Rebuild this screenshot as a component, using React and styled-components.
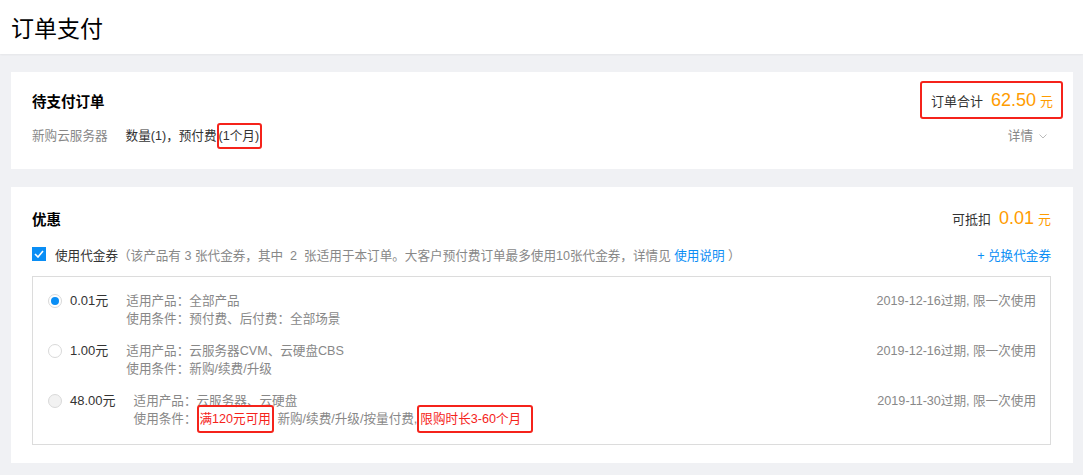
import React from "react";
import styled, { createGlobalStyle } from "styled-components";

const GlobalStyle = createGlobalStyle`
  html, body {
    margin: 0;
    padding: 0;
    background: #f0f1f4;
    font-family: "Liberation Sans", "Noto Sans CJK SC", sans-serif;
    font-size: 12.6px;
    color: #333;
  }
`;

const Header = styled.div`
  height: 54px;
  background: #fff;
  display: flex;
  align-items: center;
  padding-left: 11px;
  box-shadow: 0 1px 2px rgba(0, 0, 0, 0.05);
`;

const PageTitle = styled.h1`
  margin: 0;
  font-size: 23px;
  font-weight: normal;
  color: #000;
`;

const Main = styled.div`
  padding: 18px 10px 12px 11px;
  display: flex;
  flex-direction: column;
  gap: 18px;
`;

const Card = styled.div`
  background: #fff;
  padding: ${props => props.padding};
`;

const HeadRow = styled.div`
  display: flex;
  align-items: center;
  justify-content: space-between;
  height: ${props => props.height || 22}px;
`;

const CardTitle = styled.div`
  font-size: 14.5px;
  font-weight: bold;
  color: #000;
`;

const Mark = styled.span`
  border: 2px solid #f5231b;
  border-radius: 3px;
  color: ${props => (props.red ? "#f5231b" : "inherit")};
  padding: ${props => props.pad || "5px 1px"};
`;

const TotalBox = styled.div`
  height: 38px;
  box-sizing: border-box;
  border: 2px solid #f5231b;
  border-radius: 3px;
  display: flex;
  align-items: baseline;
  padding: 0 8px 0 9px;
  line-height: 34px;
`;

const Amount = styled.div`
  display: flex;
  align-items: baseline;
`;

const Label = styled.span`
  color: #333;
  font-size: 13px;
`;

const Price = styled.span`
  color: #ff9c00;
  font-size: 18px;
  margin: 0 4px 0 8px;
`;

const Unit = styled.span`
  color: #ff9c00;
  font-size: 13px;
`;

const DetailRow = styled.div`
  display: flex;
  align-items: center;
  justify-content: space-between;
  margin-top: 8px;
  line-height: 18px;
`;

const Grey = styled.span`
  color: #888;
  margin-right: ${props => props.gap || 0}px;
`;

const Toggle = styled.span`
  color: #888;
  display: flex;
  align-items: center;
  gap: 6px;
  margin-right: 16px;
`;

const CheckRow = styled.div`
  display: flex;
  align-items: center;
  justify-content: space-between;
  margin-top: 15px;
  height: 20px;
`;

const CheckLabel = styled.label`
  display: flex;
  align-items: center;
  color: #333;
`;

const CheckBox = styled.span`
  width: 14px;
  height: 14px;
  background: #0a8ef5;
  display: inline-flex;
  align-items: center;
  justify-content: center;
  margin-right: 9px;
`;

const Link = styled.a`
  color: #0a8ef5;
  text-decoration: none;
  cursor: pointer;
`;

const VoucherList = styled.div`
  margin-top: 12px;
  border: 1px solid #dcdcdc;
  padding: 15px 14px 16px 15px;
  display: flex;
  flex-direction: column;
  gap: 14px;
`;

const VoucherRow = styled.div`
  display: flex;
  align-items: flex-start;
  line-height: 18px;
`;

const Radio = styled.span`
  width: 14px;
  height: 14px;
  box-sizing: border-box;
  border-radius: 50%;
  border: 1px solid #d9d9d9;
  background: ${props => (props.disabled ? "#f2f2f2" : "#fff")};
  display: inline-flex;
  align-items: center;
  justify-content: center;
  margin: 2px 8px 0 0;
  flex-shrink: 0;
  &::after {
    content: "";
    width: 8px;
    height: 8px;
    border-radius: 50%;
    background: ${props => (props.checked ? "#0a8ef5" : "transparent")};
  }
`;

const Value = styled.span`
  color: #333;
  font-size: 13px;
  margin-right: 18px;
  white-space: nowrap;
`;

const Desc = styled.div`
  flex: 1;
  color: #888;
`;

const Expire = styled.div`
  color: #888;
  white-space: nowrap;
`;

const Chevron = () => (
  <svg width="8" height="5" viewBox="0 0 8 5">
    <polyline points="0.5,0.5 4,4 7.5,0.5" fill="none" stroke="#bbb" strokeWidth="1" />
  </svg>
);

const Check = () => (
  <svg width="10" height="8" viewBox="0 0 10 8">
    <polyline points="1,4 4,7 9,1" fill="none" stroke="#fff" strokeWidth="1.6" />
  </svg>
);

const vouchers = [
  {
    value: "0.01元",
    checked: true,
    product: "全部产品",
    cond: "预付费、后付费：全部场景",
    expire: "2019-12-16过期, 限一次使用"
  },
  {
    value: "1.00元",
    product: "云服务器CVM、云硬盘CBS",
    cond: "新购/续费/升级",
    expire: "2019-12-16过期, 限一次使用"
  },
  {
    value: "48.00元",
    disabled: true,
    product: "云服务器、云硬盘",
    cond: (
      <>
        <Mark red pad="5px 1px">满120元可用</Mark> 新购/续费/升级/按量付费,
        <Mark red pad="5px 10px 5px 1px">限购时长3-60个月</Mark>
      </>
    ),
    expire: "2019-11-30过期, 限一次使用"
  }
];

export default function App() {
  return (
    <>
      <GlobalStyle />
      <Header>
        <PageTitle>订单支付</PageTitle>
      </Header>
      <Main>
        <Card padding="9px 10px 24px 21px">
          <HeadRow height={38}>
            <CardTitle>待支付订单</CardTitle>
            <TotalBox>
              <Label>订单合计</Label>
              <Price>62.50</Price>
              <Unit>元</Unit>
            </TotalBox>
          </HeadRow>
          <DetailRow>
            <span>
              <Grey gap={18}>新购云服务器</Grey>
              数量(1)，预付费<Mark pad="4px 1px 4px 0">(1个月)</Mark>
            </span>
            <Toggle>
              详情 <Chevron />
            </Toggle>
          </DetailRow>
        </Card>
        <Card padding="20px 22px 18px 21px">
          <HeadRow>
            <CardTitle>优惠</CardTitle>
            <Amount>
              <Label>可抵扣</Label>
              <Price>0.01</Price>
              <Unit>元</Unit>
            </Amount>
          </HeadRow>
          <CheckRow>
            <CheckLabel>
              <CheckBox>
                <Check />
              </CheckBox>
              使用代金券
              <Grey>
                （该产品有 3 张代金券，其中 &nbsp;2&nbsp; 张适用于本订单。大客户预付费订单最多使用10张代金券，详情见{" "}
                <Link>使用说明</Link> ）
              </Grey>
            </CheckLabel>
            <Link>+ 兑换代金券</Link>
          </CheckRow>
          <VoucherList>
            {vouchers.map(v => (
              <VoucherRow key={v.value}>
                <Radio checked={v.checked} disabled={v.disabled} />
                <Value>{v.value}</Value>
                <Desc>
                  <div>适用产品：{v.product}</div>
                  <div>使用条件：{v.cond}</div>
                </Desc>
                <Expire>{v.expire}</Expire>
              </VoucherRow>
            ))}
          </VoucherList>
        </Card>
      </Main>
    </>
  );
}
